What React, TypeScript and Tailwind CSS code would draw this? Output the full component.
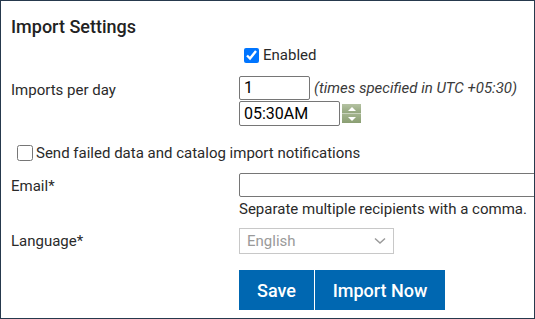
import React from "react";

export default function App() {
  const font = { fontFamily: "Roboto, 'Liberation Sans', sans-serif" };
  return (
    <div
      style={font}
      className="w-[535px] h-[319px] border border-[#26394d] bg-white overflow-hidden pl-[10px] text-[15px] text-[#2a2a2a]"
    >
      <h2 className="mt-[14px] h-[24px] leading-[24px] text-[18px] font-medium text-[#222]">
        Import Settings
      </h2>
      {/* Enabled */}
      <div className="mt-[8px] flex h-[16px] items-center">
        <div className="w-[228px] shrink-0" />
        <input type="checkbox" defaultChecked className="ml-[5px] w-[15px] h-[15px] m-0 accent-[#0075ff]" />
        <span className="ml-[4px] leading-[16px]">Enabled</span>
      </div>
      {/* Imports per day */}
      <div className="mt-[13px] flex">
        <div className="w-[228px] shrink-0 pt-[5px] leading-[18px]">Imports per day</div>
        <div className="flex flex-col gap-[1px]">
          <div className="flex items-center">
            <input
              type="text"
              defaultValue="1"
              className="w-[71px] h-[24px] border border-[#767676] rounded-[2px] px-[4px] text-[16px] text-black outline-none"
            />
            <span className="ml-[4px] italic text-[#3a3a3a] whitespace-nowrap">(times specified in UTC +05:30)</span>
          </div>
          <div className="flex items-center">
            <input
              type="text"
              defaultValue="05:30AM"
              className="w-[101px] h-[25px] border border-[#767676] rounded-[2px] px-[4px] text-[16px] text-black outline-none"
            />
            <div className="ml-[2px] w-[19px] h-[19px] flex flex-col gap-[1px] bg-[#c9d3bd]">
              <div className="flex-1 flex items-center justify-center bg-gradient-to-b from-[#b4c2a2] to-[#94a77e]">
                <div className="w-0 h-0 border-l-[4px] border-r-[4px] border-b-[4px] border-l-transparent border-r-transparent border-b-white" />
              </div>
              <div className="flex-1 flex items-center justify-center bg-gradient-to-b from-[#a3b48e] to-[#8a9e72]">
                <div className="w-0 h-0 border-l-[4px] border-r-[4px] border-t-[4px] border-l-transparent border-r-transparent border-t-white" />
              </div>
            </div>
          </div>
        </div>
      </div>
      {/* Send failed */}
      <div className="mt-[19px] flex h-[16px] items-center">
        <input type="checkbox" className="ml-[6px] w-[16px] h-[16px] m-0" />
        <span className="ml-[3px] leading-[16px] whitespace-nowrap">Send failed data and catalog import notifications</span>
      </div>
      {/* Email */}
      <div className="mt-[12px] flex">
        <div className="w-[228px] shrink-0 pt-[4px] leading-[18px]">Email*</div>
        <div className="flex flex-col shrink-0">
          <input
            type="text"
            className="w-[320px] h-[24px] border border-[#767676] rounded-[2px] px-[4px] outline-none"
          />
          <div className="mt-[3px] leading-[18px] whitespace-nowrap">Separate multiple recipients with a comma.</div>
        </div>
      </div>
      {/* Language */}
      <div className="mt-[10px] flex">
        <div className="w-[228px] shrink-0 pt-[4px] leading-[18px]">Language*</div>
        <div className="w-[155px] h-[26px] border border-[#c8c8c8] flex items-center justify-between px-[7px] text-[#9a9a9a] text-[15px]">
          <span>English</span>
          <svg width="12" height="8" viewBox="0 0 12 8" fill="none">
            <path d="M1 1.5 L6 6 L11 1.5" stroke="#9a9a9a" strokeWidth="1.5" />
          </svg>
        </div>
      </div>
      {/* Buttons */}
      <div className="mt-[16px] flex">
        <div className="w-[228px] shrink-0" />
        <button className="w-[75px] h-[40px] bg-[#0067b1] text-white text-[18px] font-medium">Save</button>
        <button className="ml-[1px] w-[130px] h-[40px] bg-[#0067b1] text-white text-[18px] font-medium">Import Now</button>
      </div>
    </div>
  );
}
